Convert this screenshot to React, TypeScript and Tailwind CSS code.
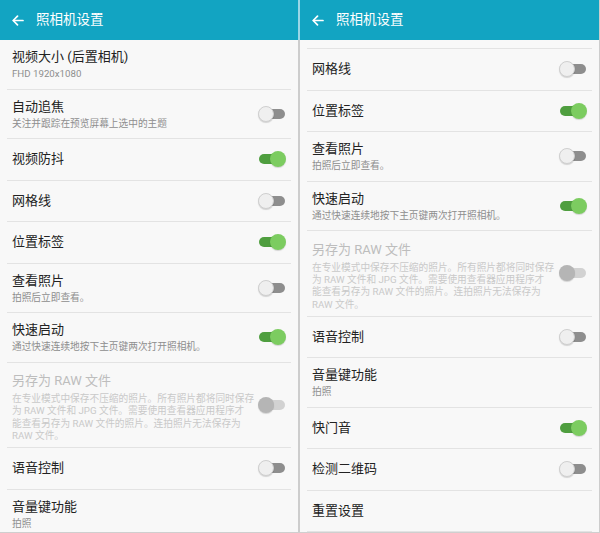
import React from 'react';

type Item = {
  title: string;
  sub?: React.ReactNode;
  toggle?: 'on' | 'off' | 'disabled';
  disabled?: boolean;
  h: string;
};

const rawSub = (
  <>
    在专业模式中保存不压缩的照片。所有照片都将同时保存
    <br />
    为 RAW 文件和 JPG 文件。需要使用查看器应用程序才
    <br />
    能查看另存为 RAW 文件的照片。连拍照片无法保存为
    <br />
    RAW 文件。
  </>
);

const leftItems: Item[] = [
  { title: '视频大小 (后置相机)', sub: 'FHD 1920x1080', h: 'h-[49.5px]' },
  { title: '自动追焦', sub: '关注并跟踪在预览屏幕上选中的主题', toggle: 'off', h: 'h-[49.5px]' },
  { title: '视频防抖', toggle: 'on', h: 'h-[41.5px]' },
  { title: '网格线', toggle: 'off', h: 'h-[41.5px]' },
  { title: '位置标签', toggle: 'on', h: 'h-[41.5px]' },
  { title: '查看照片', sub: '拍照后立即查看。', toggle: 'off', h: 'h-[49.5px]' },
  { title: '快速启动', sub: '通过快速连续地按下主页键两次打开照相机。', toggle: 'on', h: 'h-[49.5px]' },
  { title: '另存为 RAW 文件', sub: rawSub, toggle: 'disabled', disabled: true, h: 'h-[85.5px]' },
  { title: '语音控制', toggle: 'off', h: 'h-[41.5px]' },
  { title: '音量键功能', sub: '拍照', h: 'h-[49.5px]' },
];

const rightItems: Item[] = [
  { title: '网格线', toggle: 'off', h: 'h-[41.5px]' },
  { title: '位置标签', toggle: 'on', h: 'h-[41.5px]' },
  { title: '查看照片', sub: '拍照后立即查看。', toggle: 'off', h: 'h-[49.5px]' },
  { title: '快速启动', sub: '通过快速连续地按下主页键两次打开照相机。', toggle: 'on', h: 'h-[49.5px]' },
  { title: '另存为 RAW 文件', sub: rawSub, toggle: 'disabled', disabled: true, h: 'h-[85.5px]' },
  { title: '语音控制', toggle: 'off', h: 'h-[41.5px]' },
  { title: '音量键功能', sub: '拍照', h: 'h-[49.5px]' },
  { title: '快门音', toggle: 'on', h: 'h-[41.5px]' },
  { title: '检测二维码', toggle: 'off', h: 'h-[41.5px]' },
  { title: '重置设置', h: 'h-[41.5px]' },
];

function Toggle({ state }: { state: 'on' | 'off' | 'disabled' }) {
  const on = state === 'on';
  const track = on ? 'bg-[#4f9e3f]' : state === 'off' ? 'bg-[#8e8e8e]' : 'bg-[#d2d2d2]';
  const thumb = on
    ? 'right-0 bg-[#7ccc60]'
    : state === 'off'
      ? 'left-0 bg-[#efefef] border border-[#cfcfcf]'
      : 'left-0 bg-[#b5b5b5]';
  return (
    <div className="relative w-[28px] h-[16px] shrink-0">
      <div className={`absolute left-[1px] right-[1px] top-[3px] h-[10px] rounded-full ${track}`} />
      <div className={`absolute top-0 w-[16px] h-[16px] rounded-full shadow-[0_1px_1px_rgba(0,0,0,0.15)] ${thumb}`} />
    </div>
  );
}

function Row({ item }: { item: Item }) {
  return (
    <div className={`flex flex-col shrink-0 ${item.h}`}>
      <div className="flex-1 flex items-center justify-between pl-[12px] pr-[12px]">
        <div className={`flex flex-col ${item.disabled ? 'pt-[5px]' : ''}`}>
          <span
            className={`text-[13px] leading-[18px] ${item.disabled ? 'text-[#bdbdbd]' : 'text-[#222222]'}`}
          >
            {item.title}
          </span>
          {item.sub && (
            <span
              className={`text-[9.7px] ${item.disabled ? 'leading-[12.3px] mt-[3px] text-[#c9c9c9]' : 'leading-[13px] mt-[1px] text-[#8e8e8e]'}`}
            >
              {item.sub}
            </span>
          )}
        </div>
        {item.toggle && <Toggle state={item.toggle} />}
      </div>
      <div className="mx-[7px] h-px bg-[#e3e3e3]" />
    </div>
  );
}

function Header({ divider }: { divider?: boolean }) {
  return (
    <div
      className={`h-[40px] shrink-0 bg-[#12a4c2] flex items-center pl-[12px] gap-[12px] ${divider ? 'border-r-2 border-[#9bd6e6]' : ''}`}
    >
      <svg width="12" height="11" viewBox="0 0 12 11" fill="none" stroke="white" strokeWidth="1.7" strokeLinecap="round" strokeLinejoin="round">
        <path d="M11 5.5H1.5" />
        <path d="M5.5 1.2L1.2 5.5L5.5 9.8" />
      </svg>
      <span className="text-white text-[13.5px] leading-none">照相机设置</span>
    </div>
  );
}

export default function App() {
  return (
    <div className="w-[600px] h-[533px] flex overflow-hidden bg-[#f8f8f8] font-['Roboto','Noto_Sans_CJK_SC',sans-serif] border-b border-[#cfcfcf]">
      {/* left screen */}
      <div className="w-[300px] flex flex-col overflow-hidden">
        <Header divider />
        <div className="flex-1 flex flex-col overflow-hidden border-r-2 border-[#cdcdcd]">
          {leftItems.map((it, i) => (
            <Row key={i} item={it} />
          ))}
        </div>
      </div>

      {/* right screen, scrolled down */}
      <div className="flex-1 flex flex-col overflow-hidden border-r border-[#cdcdcd]">
        <Header />
        <div className="flex-1 flex flex-col overflow-hidden">
          <div className="h-[9px] shrink-0 flex flex-col justify-end">
            <div className="mx-[7px] h-px bg-[#e3e3e3]" />
          </div>
          {rightItems.map((it, i) => (
            <Row key={i} item={it} />
          ))}
        </div>
      </div>
    </div>
  );
}
